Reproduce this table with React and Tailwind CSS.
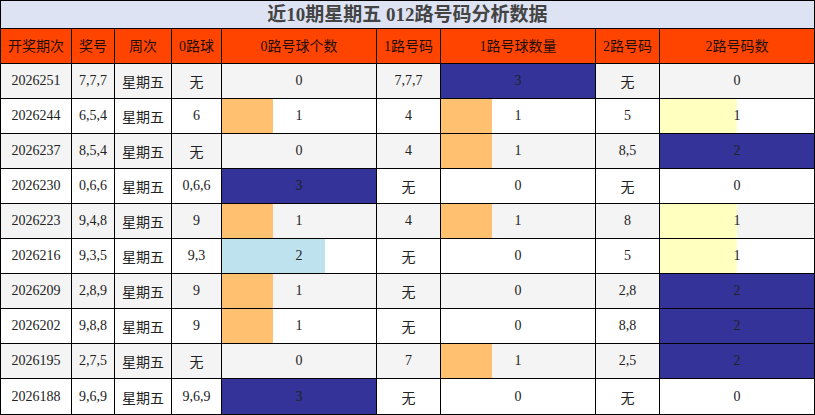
import React from "react";

const rows = [
  ["2026251", "7,7,7", "无", 0, "7,7,7", 3, "无", 0],
  ["2026244", "6,5,4", "6", 1, "4", 1, "5", 1],
  ["2026237", "8,5,4", "无", 0, "4", 1, "8,5", 2],
  ["2026230", "0,6,6", "0,6,6", 3, "无", 0, "无", 0],
  ["2026223", "9,4,8", "9", 1, "4", 1, "8", 1],
  ["2026216", "9,3,5", "9,3", 2, "无", 0, "5", 1],
  ["2026209", "2,8,9", "9", 1, "无", 0, "2,8", 2],
  ["2026202", "9,8,8", "9", 1, "无", 0, "8,8", 2],
  ["2026195", "2,7,5", "无", 0, "7", 1, "2,5", 2],
  ["2026188", "9,6,9", "9,6,9", 3, "无", 0, "无", 0],
];

const headers = ["开奖期次", "奖号", "周次", "0路球", "0路号球个数", "1路号码", "1路号球数量", "2路号码", "2路号码数"];

function barColor(count, max) {
  if (count === max) return "#333399";
  if (max === 3) return count === 1 ? "#ffc070" : "#bfe3ee";
  return "#ffffc0";
}

function Bar({ count, max, bg }) {
  const pct = (count / max) * 100;
  const style =
    count > 0
      ? { backgroundImage: `linear-gradient(to right, ${barColor(count, max)} ${pct}%, transparent ${pct}%)` }
      : undefined;
  return (
    <div className={`flex items-center justify-center border-r border-b border-black ${bg}`} style={style}>
      <span className="-mt-[1px]">{count}</span>
    </div>
  );
}

function Cell({ children, bg, cjk }) {
  return (
    <div className={`flex items-center justify-center border-r border-b border-black ${bg}`}>
      <span className={cjk ? "mt-[3px]" : "-mt-[1px]"}>{children}</span>
    </div>
  );
}

export default function App() {
  return (
    <div
      className="w-[815px] h-[415px] bg-white text-[14px] text-[#222]"
      style={{ fontFamily: '"Liberation Serif", "Noto Sans CJK SC", serif' }}
    >
      <div className="grid grid-cols-[71px_43px_57px_50px_155px_64px_155px_64px_155px] grid-rows-[28px_35px_repeat(9,35px)_36px] border-l border-t border-black box-content w-[814px]">
        <div className="col-span-9 flex items-center justify-center border-r border-b border-black bg-[#dde3f3] text-[19px] font-bold text-[#444]">
          <span className="mt-[2px]">近10期星期五 012路号码分析数据</span>
        </div>
        {headers.map((h) => (
          <div key={h} className="flex items-center justify-center border-r border-b border-black bg-[#ff4400] text-[#1f1008]">
            <span className="mt-[1px]">{h}</span>
          </div>
        ))}
        {rows.map((r, i) => {
          const bg = i % 2 === 0 ? "bg-[#f4f4f4]" : "bg-white";
          return (
            <React.Fragment key={r[0]}>
              <Cell bg={bg}>{r[0]}</Cell>
              <Cell bg={bg}>{r[1]}</Cell>
              <Cell bg={bg} cjk>星期五</Cell>
              <Cell bg={bg} cjk={r[2] === "无"}>{r[2]}</Cell>
              <Bar count={r[3]} max={3} bg={bg} />
              <Cell bg={bg} cjk={r[4] === "无"}>{r[4]}</Cell>
              <Bar count={r[5]} max={3} bg={bg} />
              <Cell bg={bg} cjk={r[6] === "无"}>{r[6]}</Cell>
              <Bar count={r[7]} max={2} bg={bg} />
            </React.Fragment>
          );
        })}
      </div>
    </div>
  );
}
